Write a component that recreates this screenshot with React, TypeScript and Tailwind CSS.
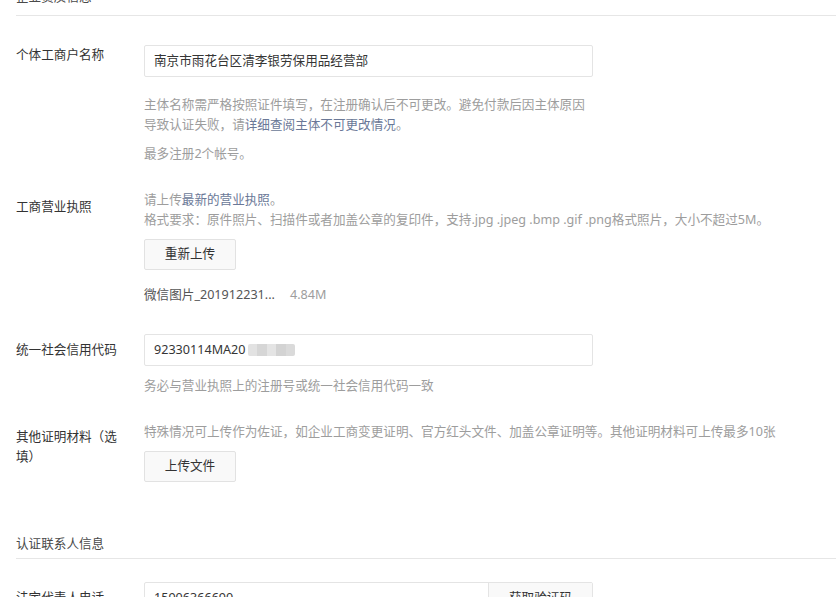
const FONT = "font-['Noto_Sans','Noto_Sans_CJK_SC',sans-serif]"

function SectionHeader({ title, className }: { title: string; className?: string }) {
  return (
    <div className={`border-b border-[#e6e6e6] ${className ?? ''}`}>
      <div className="text-[12.6px] leading-[20px] text-[#4a4a4a]">{title}</div>
    </div>
  )
}

function Button({ children, className }: { children: React.ReactNode; className?: string }) {
  return (
    <button
      className={`h-[31px] w-[92px] rounded-[2px] border border-[#e2e2e2] bg-[#f9f9f9] text-[12.6px] text-[#333] ${className ?? ''}`}
    >
      {children}
    </button>
  )
}

function Field({ value, children }: { value?: string; children?: React.ReactNode }) {
  return (
    <div className="flex h-[32px] w-[449px] items-center rounded-[2px] border border-[#e4e4e4] bg-white px-[9px] text-[12.6px] text-[#353535]">
      {value}
      {children}
    </div>
  )
}

// grey blocks standing in for the masked part of the credit code
function Masked() {
  const shades = ['bg-[#e2e2e2]', 'bg-[#d6d6d6]', 'bg-[#e4e4e4]', 'bg-[#d3d3d3]', 'bg-[#dadada]']
  return (
    <div className="ml-[2px] flex h-[12px] overflow-hidden rounded-[2px]">
      {shades.map((s, i) => (
        <div key={i} className={`h-full w-[9.5px] ${s}`} />
      ))}
    </div>
  )
}

export default function App() {
  return (
    <div className={`${FONT} h-[597px] w-[836px] overflow-hidden bg-white pl-4 text-[12.6px]`}>
      {/* 企业资质信息 */}
      <SectionHeader title="企业资质信息" className="-mt-[13px] pb-[8px]" />

      {/* 个体工商户名称 */}
      <div className="mt-[29px] flex">
        <div className="w-[128px] shrink-0 leading-[20px] text-[#333]">个体工商户名称</div>
        <div>
          <Field value="南京市雨花台区清李银劳保用品经营部" />
          <div className="mt-[18px] w-[449px] leading-[20px] text-[#9d9d9d]">
            主体名称需严格按照证件填写，在注册确认后不可更改。避免付款后因主体原因导致认证失败，请
            <span className="text-[#6a7897]">详细查阅主体不可更改情况</span>。
          </div>
          <div className="mt-[9px] leading-[20px] text-[#9d9d9d]">最多注册2个帐号。</div>
        </div>
      </div>

      {/* 工商营业执照 */}
      <div className="mt-[26px] flex">
        <div className="mt-[7px] w-[128px] shrink-0 leading-[20px] text-[#333]">工商营业执照</div>
        <div>
          <div className="leading-[20px] text-[#9d9d9d]">
            请上传<span className="text-[#6a7897]">最新的营业执照</span>。
          </div>
          <div className="leading-[20px] text-[#9d9d9d]">
            格式要求：原件照片、扫描件或者加盖公章的复印件，支持.jpg .jpeg .bmp .gif .png格式照片，大小不超过5M。
          </div>
          <Button className="mt-[9px]">重新上传</Button>
          <div className="mt-[15px] flex leading-[20px]">
            <span className="text-[#555]">微信图片_201912231...</span>
            <span className="ml-[15px] text-[#9d9d9d]">4.84M</span>
          </div>
        </div>
      </div>

      {/* 统一社会信用代码 */}
      <div className="mt-[29px] flex">
        <div className="flex h-[32px] w-[128px] shrink-0 items-center text-[#333]">统一社会信用代码</div>
        <div>
          <Field value="92330114MA20">
            <Masked />
          </Field>
          <div className="mt-[10px] leading-[20px] text-[#9d9d9d]">务必与营业执照上的注册号或统一社会信用代码一致</div>
        </div>
      </div>

      {/* 其他证明材料 */}
      <div className="mt-[26px] flex">
        <div className="mt-[5px] w-[112px] shrink-0 leading-[20px] text-[#333]">其他证明材料（选填）</div>
        <div className="ml-[16px]">
          <div className="leading-[20px] text-[#9d9d9d]">
            特殊情况可上传作为佐证，如企业工商变更证明、官方红头文件、加盖公章证明等。其他证明材料可上传最多10张
          </div>
          <Button className="mt-[9px]">上传文件</Button>
        </div>
      </div>

      {/* 认证联系人信息 */}
      <SectionHeader title="认证联系人信息" className="mt-[52px] pb-[4px]" />

      <div className="mt-[23px] flex">
        <div className="flex h-[32px] w-[128px] shrink-0 items-center text-[#333]">法定代表人电话</div>
        <div className="flex h-[32px] w-[449px] rounded-[2px] border border-[#e4e4e4]">
          <div className="flex flex-1 items-center px-[9px] text-[#353535]">15906366690</div>
          <div className="flex w-[104px] items-center justify-center border-l border-[#e4e4e4] bg-[#f9f9f9] text-[#333]">
            获取验证码
          </div>
        </div>
      </div>
    </div>
  )
}
